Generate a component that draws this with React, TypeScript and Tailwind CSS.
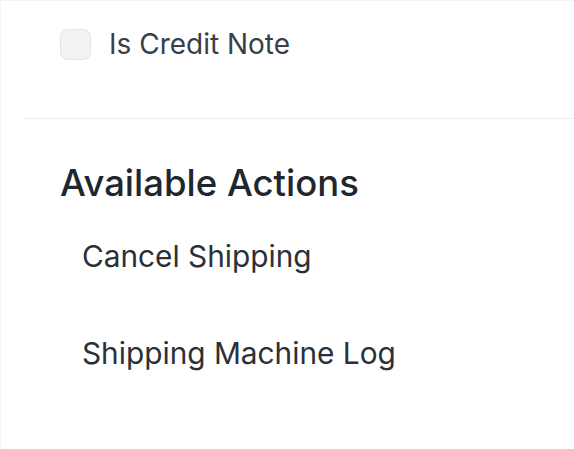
export default function App() {
  return (
    <div className="h-[449px] w-[574px] overflow-hidden border-l border-t border-[#f4f4f4] bg-white font-['Inter',sans-serif] text-[#1f272e]">
      <div className="flex items-center gap-[18px] pl-[59px] pt-[28px]">
        <div className="h-[31px] w-[31px] rounded-[8px] border border-[#e2e4e7] bg-[#f1f2f3]" />
        <span className="-mt-[2px] text-[28px] leading-[32px] text-[#383f47]">Is Credit Note</span>
      </div>
      <div className="ml-[23px] mt-[58px] h-px bg-[#ededed]" />
      <div className="pl-[59px] pt-[44px]">
        <h2 className="text-[36.5px] font-medium leading-[40px]">Available Actions</h2>
        <div className="mt-[33px] flex flex-col gap-[57px] pl-[22px] text-[29.8px] leading-[40px] text-[#2b3036]">
          <span>Cancel Shipping</span>
          <span>Shipping Machine Log</span>
        </div>
      </div>
    </div>
  )
}
